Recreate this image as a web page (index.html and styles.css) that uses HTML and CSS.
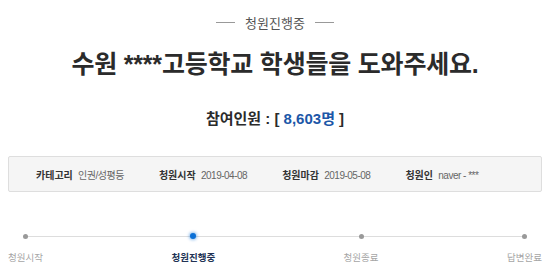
FILE: index.html
```html
<!DOCTYPE html>
<html lang="ko">
<head>
    <meta charset="UTF-8">
    <meta name="viewport" content="width=device-width, initial-scale=1.0">
    <title>청원진행중</title>
    <link rel="stylesheet" href="styles.css">
</head>
<body>

    <div class="petition">
        <div class="status">
            <span class="status-line"></span>
            <span class="status-text">청원진행중</span>
            <span class="status-line"></span>
        </div>

        <h1 class="title">수원 ****고등학교 학생들을 도와주세요.</h1>

        <p class="count">참여인원 : [ <span class="count-num">8,603명</span> ]</p>

        <ul class="info">
            <li><strong>카테고리</strong> 인권/성평등</li>
            <li><strong>청원시작</strong> 2019-04-08</li>
            <li><strong>청원마감</strong> 2019-05-08</li>
            <li><strong>청원인</strong> naver - ***</li>
        </ul>

        <ol class="steps">
            <li class="step"><span class="dot"></span>청원시작</li>
            <li class="step active"><span class="dot"></span>청원진행중</li>
            <li class="step"><span class="dot"></span>청원종료</li>
            <li class="step"><span class="dot"></span>답변완료</li>
        </ol>
    </div>

</body>
</html>
```

FILE: styles.css
```css
* {
    box-sizing: border-box;
    margin: 0;
    padding: 0;
}
body {
    font-family: "Liberation Sans", "Noto Sans CJK KR", sans-serif;
    color: #333;
    background: #fff;
}
.petition {
    padding: 14px 8px 0 8px;
}
.status {
    display: flex;
    justify-content: center;
    align-items: center;
    gap: 10px;
    height: 16px;
}
.status-line {
    width: 19px;
    height: 1px;
    background: #999;
}
.status-text {
    font-size: 13px;
    color: #555;
}
.title {
    margin-top: 19px;
    text-align: center;
    font-size: 25px;
    font-weight: bold;
    color: #2b2b2b;
    letter-spacing: -0.2px;
    line-height: 30px;
}
.count {
    margin-top: 31px;
    text-align: center;
    font-size: 15px;
    font-weight: bold;
    color: #2b2b2b;
    line-height: 18px;
}
.count-num {
    color: #1c57a8;
}
.info {
    list-style: none;
    margin-top: 28px;
    height: 36px;
    display: flex;
    align-items: center;
    gap: 35px;
    padding-left: 27px;
    background: #f5f5f5;
    border: 1px solid #dedede;
    border-radius: 2px;
    font-size: 10px;
    letter-spacing: -0.5px;
    color: #666;
}
.info strong {
    letter-spacing: 0;
    color: #333;
    margin-right: 3px;
}
.steps {
    list-style: none;
    position: relative;
    display: flex;
    justify-content: space-between;
    margin-top: 42px;
}
.steps::before {
    content: "";
    position: absolute;
    left: 17px;
    right: 17px;
    top: 2px;
    height: 1px;
    background: #ddd;
}
.step {
    position: relative;
    display: flex;
    flex-direction: column;
    align-items: center;
    gap: 11px;
    font-size: 9.5px;
    color: #a5a5a5;
}
.dot {
    width: 5px;
    height: 5px;
    border-radius: 50%;
    background: #999;
}
.step.active {
    color: #223355;
    font-weight: bold;
}
.step.active .dot {
    width: 6px;
    height: 6px;
    margin-top: -1px;
    background: #0a6fd6;
    box-shadow: 0 0 3px 1px rgba(10, 111, 214, 0.45);
}
```
